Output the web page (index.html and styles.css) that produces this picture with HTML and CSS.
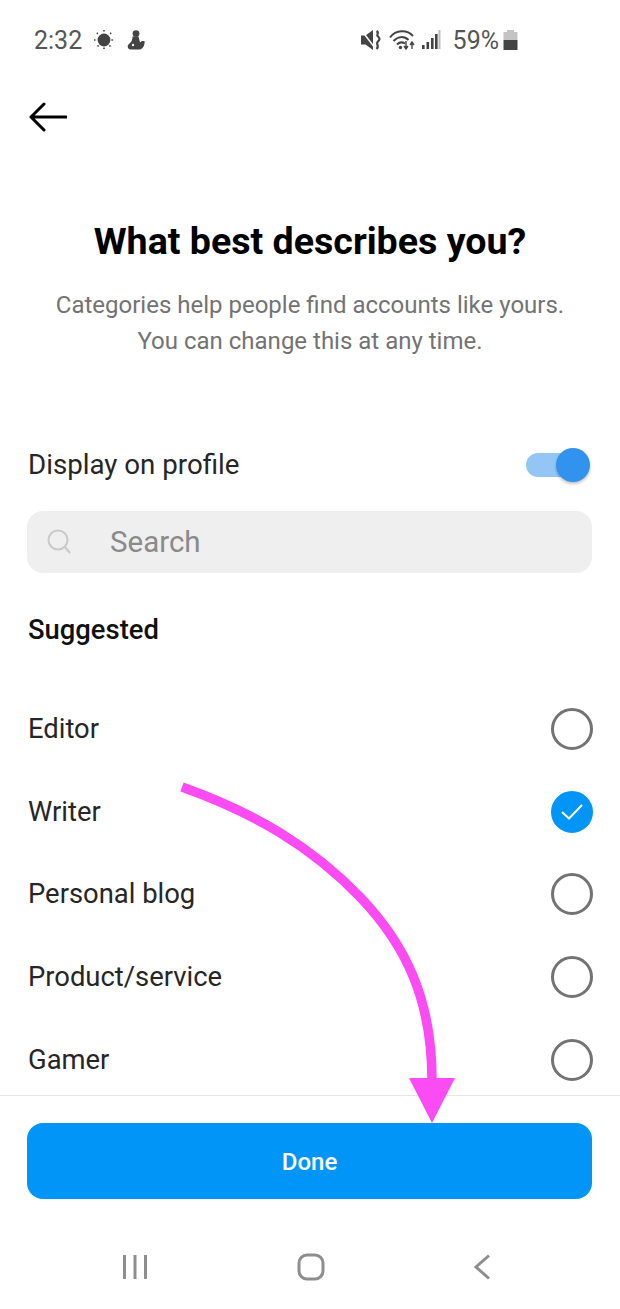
FILE: index.html
```html
<!DOCTYPE html>
<html lang="en">
<head>
    <meta charset="UTF-8">
    <meta name="viewport" content="width=device-width, initial-scale=1.0">
    <title>What best describes you?</title>
    <link rel="stylesheet" href="styles.css">
</head>
<body>

    <div class="status-bar">
        <div class="status-left">
            <span class="status-time">2:32</span>
            <svg class="icon-sun" width="20" height="20" viewBox="0 0 20 20">
                <circle cx="10" cy="10" r="6.400" fill="#444"/>
                <g stroke="#444" stroke-width="1.600" stroke-dasharray="1.500 1">
                    <path d="M10 0v2.600M10 17.400V20M0 10h2.600M17.400 10H20M2.800 2.800l1.800 1.800M15.400 15.400l1.800 1.800M17.200 2.800l-1.800 1.800M4.600 15.400l-1.800 1.800"/>
                </g>
            </svg>
            <svg class="icon-figure" width="18" height="20" viewBox="0 0 18 20">
                <circle cx="9" cy="3.600" r="3.400" fill="#444"/>
                <path d="M5.500 6.500h6l1.500 6 2-1.500h2.500c.5 4-1.500 8-5 8.500H3.500C.5 19.500-.5 15.500 2.500 13.500 4.500 12 5.500 10 5.500 6.500z" fill="#444"/>
                <circle cx="6" cy="15" r="1.200" fill="#fff"/>
            </svg>
        </div>
        <div class="status-right">
            <svg class="icon-mute" width="21" height="20" viewBox="0 0 21 20">
                <path d="M0 5.500h4.500L12 0v20l-7.500-5.500H0z" fill="#444"/>
                <path d="M1 1l13 17" stroke="#fff" stroke-width="1.500"/>
                <path d="M15.500 1c3.500 2-1 3.500 1.500 5.500s1.500 3.500-.5 5.500 2.500 4-1 7" fill="none" stroke="#444" stroke-width="2.200"/>
            </svg>
            <svg class="icon-wifi" width="26" height="20" viewBox="0 0 26 20">
                <g fill="none" stroke="#444" stroke-width="2">
                    <path d="M1 7.500C7-.5 18-.5 24 6"/>
                    <path d="M4.500 11c4.500-5 11-5 15-1"/>
                    <path d="M8 14.500c2.500-2.500 5.500-2.500 8-1"/>
                </g>
                <circle cx="11.500" cy="17.500" r="1.700" fill="#444"/>
                <path d="M17 11v7M15 16l2 3 2-3M23 19v-6M21 15l2-3 2 3" fill="none" stroke="#444" stroke-width="1.400"/>
            </svg>
            <svg class="icon-signal" width="19" height="20" viewBox="0 0 19 20">
                <rect x="0" y="15" width="2.600" height="4" fill="#444"/>
                <rect x="4.500" y="12" width="2.600" height="7" fill="#444"/>
                <rect x="9" y="8" width="2.600" height="11" fill="#444"/>
                <rect x="13" y="4" width="2.600" height="15" fill="#444"/>
                <rect x="16.500" y="0" width="2" height="19" fill="#bdbdbd"/>
            </svg>
            <span class="status-battery">59%</span>
            <svg class="icon-battery" width="15" height="20" viewBox="0 0 15 20">
                <path d="M4 0h7v2h3.500v8H.5V2H4z" fill="#c4c4c4"/>
                <rect x="0.500" y="10" width="14" height="10" fill="#444"/>
            </svg>
        </div>
    </div>

    <div class="top-nav">
        <svg width="38" height="30" viewBox="0 0 38 30">
            <path d="M37 15H2M15 2L2 15l13 13" fill="none" stroke="#000" stroke-width="3" stroke-linecap="round" stroke-linejoin="round"/>
        </svg>
    </div>

    <div class="intro">
        <h1>What best describes you?</h1>
        <p>Categories help people find accounts like yours.<br>You can change this at any time.</p>
    </div>

    <div class="display-row">
        <span>Display on profile</span>
        <div class="toggle">
            <div class="toggle-knob"></div>
        </div>
    </div>

    <div class="search-box">
        <svg width="26" height="28" viewBox="0 0 26 28">
            <circle cx="11" cy="12" r="9.500" fill="none" stroke="#c9c9c9" stroke-width="2"/>
            <path d="M18 19l4.500 5.500" stroke="#c9c9c9" stroke-width="2" stroke-linecap="round"/>
        </svg>
        <span>Search</span>
    </div>

    <h2 class="section-title">Suggested</h2>

    <div class="category-list">
        <div class="category-row">
            <span>Editor</span>
            <div class="radio"></div>
        </div>
        <div class="category-row">
            <span>Writer</span>
            <div class="radio checked">
                <svg width="24" height="20" viewBox="0 0 24 20">
                    <path d="M2 10l7 6.500L22 3" fill="none" stroke="#fff" stroke-width="2"/>
                </svg>
            </div>
        </div>
        <div class="category-row">
            <span>Personal blog</span>
            <div class="radio"></div>
        </div>
        <div class="category-row">
            <span>Product/service</span>
            <div class="radio"></div>
        </div>
        <div class="category-row">
            <span>Gamer</span>
            <div class="radio"></div>
        </div>
    </div>

    <div class="footer">
        <button class="done-btn">Done</button>
    </div>

    <div class="nav-bar">
        <svg width="26" height="26" viewBox="0 0 26 26">
            <path d="M2.500 1v24M13 1v24M23.500 1v24" stroke="#8e8e8e" stroke-width="3"/>
        </svg>
        <svg width="28" height="28" viewBox="0 0 28 28">
            <rect x="2" y="2" width="24" height="24" rx="8" fill="none" stroke="#8e8e8e" stroke-width="3"/>
        </svg>
        <svg width="18" height="26" viewBox="0 0 18 26">
            <path d="M16 1.500L3 13l13 11.500" fill="none" stroke="#8e8e8e" stroke-width="3"/>
        </svg>
    </div>

    <!-- pink annotation on top of the screenshot -->
    <svg class="arrow" width="620" height="1309" viewBox="0 0 620 1309">
        <path d="M182 787C255 813 312 847 360 897C406 945 432 1000 432 1080" fill="none" stroke="#fb4bf3" stroke-width="9.500"/>
        <path d="M409 1078h46l-23 45z" fill="#fb4bf3"/>
    </svg>

</body>
</html>
```

FILE: styles.css
```css
body {
    margin: 0;
    width: 620px;
    height: 1309px;
    position: relative;
    overflow: hidden;
    background: #fff;
    font-family: Roboto, "Liberation Sans", sans-serif;
    color: #262626;
}

/* status bar */
.status-bar {
    height: 80px;
    display: flex;
    justify-content: space-between;
    align-items: center;
    padding: 0 102px 0 34px;
    color: #555;
}
.status-left,
.status-right {
    display: flex;
    align-items: center;
}
.status-time,
.status-battery {
    font-size: 25px;
}
.icon-sun {
    margin-left: 12px;
}
.icon-figure {
    margin-left: 13px;
}
.icon-wifi {
    margin-left: 7px;
}
.icon-signal {
    margin-left: 7px;
}
.status-battery {
    margin-left: 12px;
}
.icon-battery {
    margin-left: 4px;
}

.top-nav {
    height: 30px;
    padding: 22px 0 0 29px;
}
.top-nav svg {
    display: block;
}

.intro {
    margin-top: 85px;
    text-align: center;
}
.intro h1 {
    margin: 0;
    font-size: 37.6px;
    line-height: 48px;
    font-weight: 700;
    color: #000;
}
.intro p {
    margin: 22px 0 0;
    font-size: 24px;
    line-height: 36px;
    color: #737373;
}

.display-row {
    margin-top: 88px;
    padding: 0 30px 0 28px;
    height: 36px;
    display: flex;
    justify-content: space-between;
    align-items: center;
    font-size: 27.7px;
}
.display-row span {
    padding-bottom: 2px;
}
.toggle {
    width: 59px;
    height: 24px;
    border-radius: 12px;
    background: #93c6f4;
    margin-right: 5px;
    position: relative;
}
.toggle-knob {
    position: absolute;
    right: -5px;
    top: -5px;
    width: 34px;
    height: 34px;
    border-radius: 50%;
    background: #3193ed;
    box-shadow: 0 2px 3px rgba(0, 0, 0, 0.25);
}

.search-box {
    margin: 28px 28px 0 27px;
    height: 62px;
    border-radius: 16px;
    background: #efefef;
    display: flex;
    align-items: center;
    padding-left: 20px;
    font-size: 29.5px;
    color: #8a8a8a;
}
.search-box span {
    margin-left: 37px;
}

.section-title {
    margin: 39px 0 0 28px;
    font-size: 27.4px;
    line-height: 36px;
    font-weight: 500;
    color: #111;
}

.category-list {
    margin-top: 40px;
    padding: 0 27px 0 28px;
    height: 407px;
    overflow: hidden;
}
.category-row {
    height: 82.6px;
    display: flex;
    justify-content: space-between;
    align-items: center;
    font-size: 27.4px;
}
.radio {
    width: 36px;
    height: 36px;
    border: 3px solid #737373;
    border-radius: 50%;
    display: flex;
    justify-content: center;
    align-items: center;
}
.radio.checked {
    background: #0095f6;
    border-color: #0095f6;
}

.footer {
    border-top: 1px solid #e6e6e6;
    padding: 27px 28px 0 27px;
}
.done-btn {
    display: block;
    width: 100%;
    height: 76px;
    padding-top: 2px;
    border: none;
    border-radius: 16px;
    background: #0095f6;
    color: #fff;
    font-family: inherit;
    font-size: 24px;
    font-weight: 500;
}

.nav-bar {
    margin-top: 54px;
    padding: 0 129px 0 122px;
    display: flex;
    justify-content: space-between;
    align-items: center;
}

/* annotation */
.arrow {
    position: absolute;
    left: 0;
    top: 0;
}
```
